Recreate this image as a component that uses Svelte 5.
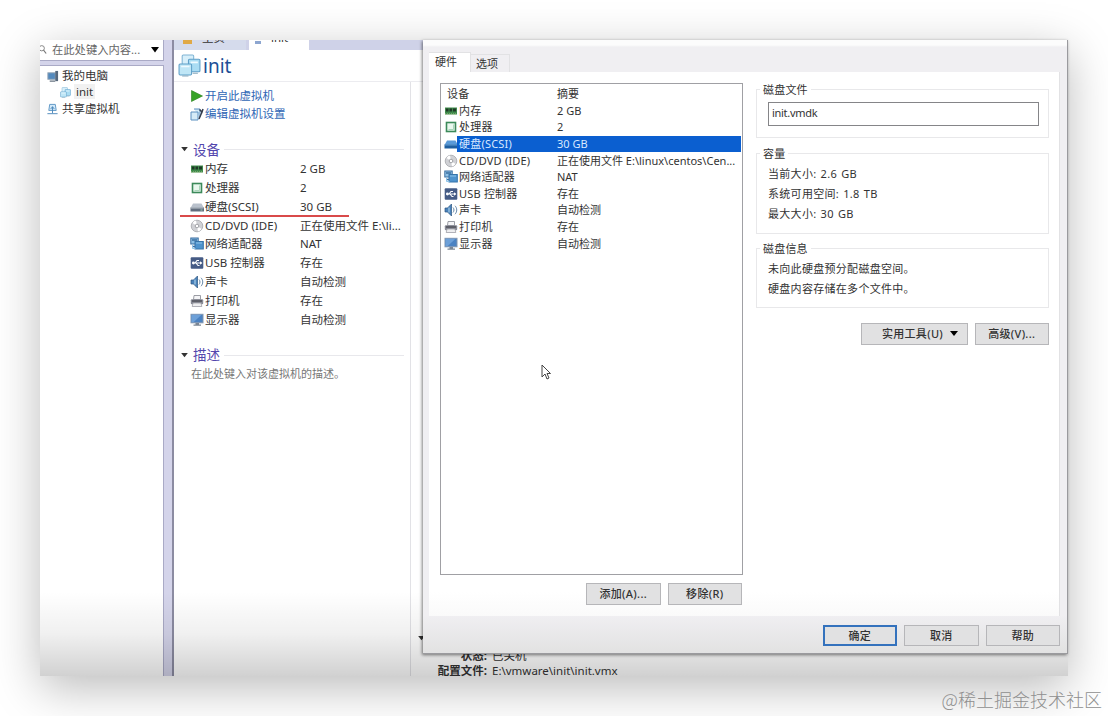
<script lang="ts">
	interface Device {
		icon: string;
		name: string;
		summary: string;
		path?: string;
	}

	const devices: Device[] = [
		{ icon: 'memory', name: '内存', summary: '2 GB' },
		{ icon: 'cpu', name: '处理器', summary: '2' },
		{ icon: 'disk', name: '硬盘(SCSI)', summary: '30 GB' },
		{ icon: 'cd', name: 'CD/DVD (IDE)', summary: '正在使用文件 E:\\li...', path: '正在使用文件 E:\\linux\\centos\\Cen...' },
		{ icon: 'network', name: '网络适配器', summary: 'NAT' },
		{ icon: 'usb', name: 'USB 控制器', summary: '存在' },
		{ icon: 'sound', name: '声卡', summary: '自动检测' },
		{ icon: 'printer', name: '打印机', summary: '存在' },
		{ icon: 'display', name: '显示器', summary: '自动检测' }
	];

	let selected = $state('disk');
</script>

{#snippet icon(name: string)}
	<svg class="icon" viewBox="0 0 14 14">
		{#if name === 'memory'}
			<path d="M1 3.5h12v7H1z" fill="#3f8a4b" />
			<path d="M2 4.5h2.5v3H2zM5.5 4.5H8v3H5.5zM9 4.5h3v3H9z" fill="#1f3826" />
			<path d="M1 10h12" stroke="#a9c58c" stroke-dasharray="1 1" />
		{:else if name === 'cpu'}
			<rect x="2.5" y="2.5" width="9" height="9" fill="#e9f8ee" stroke="#3c8a5a" stroke-width="1.6" />
			<path d="M4.5 9.5h5v-5" fill="none" stroke="#a9d5ba" />
		{:else if name === 'disk'}
			<path d="M3 3.5h8.5L14 8H.5z" fill="#b9c1cc" />
			<path d="M.5 7.5H14v4H.5z" fill="#616d7d" />
			<path d="M1 8h12.5" stroke="#e3e8ee" stroke-width=".7" />
			<path d="M10.5 10h2" stroke="#9fd0b5" />
		{:else if name === 'disk-selected'}
			<path d="M3 3.5h8.5L14 8H.5z" fill="#5a9ad8" />
			<path d="M.5 7.5H14v4H.5z" fill="#1f5f9f" />
			<path d="M1 8h12.5" stroke="#7fb7e6" stroke-width=".7" />
		{:else if name === 'cd'}
			<circle cx="7" cy="7" r="5.8" fill="#d0d1d5" stroke="#a4a6ab" stroke-width=".8" />
			<path d="M7 7 2.5 4A5.5 5.5 0 0 1 6 1.6zM7 7l4.6 3A5.5 5.5 0 0 1 8 12.4z" fill="#fff" />
			<circle cx="7" cy="7" r="1.8" fill="#fff" stroke="#8f9196" stroke-width=".8" />
		{:else if name === 'network'}
			<rect x=".8" y="1" width="7.4" height="6" fill="#8fc1e6" stroke="#3a6d9f" />
			<path d="M2 3h5M2 9.5h3" stroke="#3a6d9f" stroke-width="1.4" />
			<rect x="5" y="4.5" width="8.3" height="7.5" fill="#4e93cd" stroke="#3674aa" />
			<path d="M6 6h6M2.5 7.5v4h3" fill="none" stroke="#8fc4e9" />
		{:else if name === 'usb'}
			<rect x=".7" y="1.2" width="12.6" height="11.6" rx="1" fill="#455b85" />
			<path d="M2.5 7h9M5 7l2-2.5h2M6 7l2 2.5h1.5" fill="none" stroke="#fff" stroke-width="1.1" />
			<circle cx="3.4" cy="7" r="1.4" fill="#fff" />
			<path d="m10 5.2 2.4 1.8L10 8.8z" fill="#fff" />
		{:else if name === 'sound'}
			<path d="M1 5h2.5L7.5 1v12l-4-4H1z" fill="#4a82ba" stroke="#2b557f" stroke-width=".7" />
			<path d="M5 4.5v5" stroke="#b9dcf2" />
			<path d="M9 4.5c1.3 1.4 1.3 3.6 0 5M11 2.8c2.3 2.3 2.3 6 0 8.4" fill="none" stroke="#6688a8" />
		{:else if name === 'printer'}
			<path d="M4 1.5h6.5v4h-7z" fill="#f5f5f7" stroke="#84868f" stroke-width=".8" />
			<rect x=".8" y="5.2" width="12.4" height="5" rx="1" fill="#888a95" />
			<path d="M2 7h10" stroke="#34353d" />
			<path d="M3 9h8l.8 3.5H2.2z" fill="#eeeef0" stroke="#93949c" stroke-width=".7" />
		{:else}
			<rect x="1" y="1.3" width="12" height="8.5" fill="#4b82c2" stroke="#8296af" />
			<path d="M1.5 1.8h10l-8 7.5h-2z" fill="#6da0d8" />
			<path d="M5.5 10H9v1.5h2v1.3H3.5v-1.3h2z" fill="#7b8694" />
		{/if}
	</svg>
{/snippet}

{#snippet machine(cls: string)}
	<svg class={cls} viewBox="0 0 22 22">
		<rect x="4" y="1" width="11" height="11" rx="1" fill="#d7effa" stroke="#80b4d4" />
		<rect x="10" y="5" width="11" height="12" rx="1" fill="#a9dcf3" stroke="#5f9fc8" />
		<rect x="1" y="9.5" width="12" height="10.5" rx="1" fill="#bfe6f6" stroke="#5f9fc8" />
		<path d="M3 12h8M12 8h7" stroke="#effaff" stroke-width="1.5" />
		<path d="M4 21h6M14 18.5h5" stroke="#87a9bd" />
	</svg>
{/snippet}

<div class="page">
	<div class="screen">
		<aside class="library">
			<div class="search">
				<svg class="lens" viewBox="0 0 8 12"><circle cx="2" cy="4" r="3" fill="none" stroke="#777" /><path d="m4 6 3 4" stroke="#777" stroke-width="1.4" /></svg>
				<span>在此处键入内容...</span>
				<svg class="caret" viewBox="0 0 8 6"><path d="M0 0h8L4 5.5z" /></svg>
			</div>
			<div class="tree">
				<div class="node">
					<svg class="node-icon" viewBox="0 0 14 14"><rect x="2" y="3" width="8" height="7" fill="#5389bd" stroke="#96a6b5" /><path d="M10 1h3v11h-3z" fill="#55677c" /><path d="M4 12h6" stroke="#75818d" stroke-width="1.5" /></svg>
					我的电脑
				</div>
				<div class="node child">{@render machine('mini')}<span class="current">init</span></div>
				<div class="node">
					<svg class="node-icon" viewBox="0 0 14 14"><path d="M4 1.5h6l1 6.5H3z" fill="#d3eafa" stroke="#5a94c4" /><path d="M7 4v7M5 6.500 7 4l2 2.500M1.500 11.500h11" fill="none" stroke="#4b87ba" /></svg>
					共享虚拟机
				</div>
			</div>
		</aside>

		<main class="workspace">
			<div class="tabs">
				<div class="tab"><span class="house"></span><span>主页</span></div>
				<div class="tab open"><span class="dot"></span><span>init</span></div>
			</div>
			<header>{@render machine('logo')}<h1>init</h1></header>
			<div class="columns">
				<section class="overview">
					<div class="actions">
						<div class="action"><svg class="icon" viewBox="0 0 14 14"><path d="m1.5 1.5 11 5.5-11 5.5z" fill="#37a327" stroke="#27801b" stroke-width=".6" /></svg>开启此虚拟机</div>
						<div class="action"><svg class="icon" viewBox="0 0 14 14"><path d="M1 5h7v8H1zM4 2h6v8" fill="#d5ebf7" stroke="#5a8fc0" /><path d="M9 12 12 5M9.5 2.500 12 5l1-3" fill="none" stroke="#333b4c" stroke-width="1.5" /></svg>编辑虚拟机设置</div>
					</div>
					<h2><svg class="fold" viewBox="0 0 8 6"><path d="M0 0h8L4 5z" /></svg>设备<i></i></h2>
					<div class="devices">
						{#each devices as device}
							<div class="device">{@render icon(device.icon)}<span class="name">{device.name}</span><span>{device.summary}</span></div>
						{/each}
						<div class="marker"></div>
					</div>
					<h2 class="second"><svg class="fold" viewBox="0 0 8 6"><path d="M0 0h8L4 5z" /></svg>描述<i></i></h2>
					<p class="hint">在此处键入对该虚拟机的描述。</p>
				</section>
				<section class="details">
					<svg class="fold" viewBox="0 0 8 6"><path d="M0 0h8L4 5z" /></svg>
					<dl>
						<dt>状态:</dt><dd>已关机</dd>
						<dt>配置文件:</dt><dd>E:\vmware\init\init.vmx</dd>
					</dl>
				</section>
			</div>
		</main>
		<div class="shade"></div>

		<div class="dialog">
			<div class="dialog-tabs">
				<div class="dialog-tab front">硬件</div>
				<div class="dialog-tab">选项</div>
			</div>
			<div class="sheet">
				<div class="hardware">
					<div class="listbox">
						<div class="row head"><span class="cell">设备</span><span>摘要</span></div>
						{#each devices as device}
							<div class="row" class:selected={selected === device.icon}>
								{@render icon(selected === device.icon ? device.icon + '-selected' : device.icon)}
								<div class="row-text"><span class="cell">{device.name}</span><span>{device.path ?? device.summary}</span></div>
							</div>
						{/each}
					</div>
					<div class="buttons">
						<button onclick={() => (selected = 'disk')}>添加(A)...</button>
						<button>移除(R)</button>
					</div>
				</div>
				<div class="settings">
					<div class="group file"><span class="legend">磁盘文件</span><div class="field">init.vmdk</div></div>
					<div class="group capacity">
						<span class="legend">容量</span>
						<p>当前大小: 2.6 GB</p>
						<p>系统可用空间: 1.8 TB</p>
						<p>最大大小: 30 GB</p>
					</div>
					<div class="group info">
						<span class="legend">磁盘信息</span>
						<p>未向此硬盘预分配磁盘空间。</p>
						<p>硬盘内容存储在多个文件中。</p>
					</div>
					<div class="buttons tools">
						<button class="wide">实用工具(U)<svg class="caret" viewBox="0 0 8 6"><path d="M0 0h8L4 5z" /></svg></button>
						<button>高级(V)...</button>
					</div>
				</div>
			</div>
			<footer>
				<button class="primary">确定</button>
				<button>取消</button>
				<button>帮助</button>
			</footer>
		</div>

		<svg class="pointer" viewBox="0 0 10 16"><path d="M1 1v12l3-3 2 5 2-1-2-4.5h3.5z" fill="#fff" stroke="#444" /></svg>
	</div>
	<div class="credit">@稀土掘金技术社区</div>
</div>

<style>
	:global(body) {
		background: #fff;
	}

	.page {
		box-sizing: border-box;
		position: relative;
		width: 1108px;
		height: 716px;
		padding: 40px;
		overflow: hidden;
		font: 11.5px/18px "Noto Sans", "Noto Sans CJK SC", sans-serif;
		color: #333;
		white-space: nowrap;
	}

	.page * {
		box-sizing: border-box;
	}

	svg {
		flex: none;
		display: block;
	}

	.screen {
		position: relative;
		display: flex;
		width: 1028px;
		height: 636px;
		background: #fff;
		box-shadow: 0 12px 44px rgba(0, 0, 0, 0.27);
	}

	/* library */
	.library {
		display: flex;
		flex-direction: column;
		gap: 4px;
		width: 134px;
		padding-right: 8px;
		background: #d4d4ea;
		border-right: 2px solid #8c8ca2;
	}

	.search {
		display: flex;
		align-items: center;
		height: 21px;
		background: #fff;
		border: solid #aaaac6;
		border-width: 0 1px 1px 0;
		font-size: 11.3px;
		color: #666;
	}

	.search span {
		width: 99px;
		padding-left: 5px;
	}

	.lens {
		width: 7px;
		height: 12px;
	}

	.caret {
		width: 8px;
		height: 6px;
		margin-left: 5px;
	}

	.tree {
		flex: 1;
		padding-top: 2px;
		background: #fff;
		border: solid #aaaac6;
		border-width: 1px 1px 0 0;
	}

	.node {
		display: flex;
		align-items: center;
		gap: 3px;
		height: 16.6px;
		padding-left: 6px;
	}

	.node.child {
		padding-left: 20px;
	}

	.node-icon {
		width: 13px;
		height: 13px;
	}

	.mini {
		width: 11px;
		height: 11px;
	}

	.current {
		margin-bottom: 2px;
		padding: 0 2px;
		background: #f1f1f1;
		line-height: 15px;
	}

	/* workspace */
	.workspace {
		display: flex;
		flex: 1;
		flex-direction: column;
		min-width: 0;
	}

	.tabs {
		display: flex;
		gap: 3px;
		height: 10px;
		background: #cfd2e8;
	}

	.tab {
		display: flex;
		align-items: flex-end;
		gap: 10px;
		width: 72px;
		height: 10px;
		padding-left: 9px;
		overflow: hidden;
		background: #d5dbec;
		line-height: 14px;
	}

	.tab span {
		margin-bottom: 5px;
	}

	.tab.open {
		width: 60px;
		padding-left: 6px;
		background: #fff;
	}

	.tab .house {
		width: 9px;
		height: 4px;
		margin-bottom: 6px;
		background: #e0a947;
	}

	.tab .dot {
		width: 6px;
		height: 3px;
		margin-bottom: 6px;
		background: #8da6d0;
	}

	header {
		display: flex;
		align-items: center;
		gap: 2px;
		height: 32px;
		padding-left: 4px;
		border-bottom: 1px solid #ececf0;
	}

	.logo {
		width: 23px;
		height: 23px;
	}

	h1 {
		margin: 0;
		font-size: 19px;
		font-weight: 400;
		line-height: 32px;
		color: #204f96;
	}

	.columns {
		display: flex;
		flex: 1;
		min-height: 0;
	}

	.overview {
		width: 237px;
		padding: 5px 6px 0 7px;
		border-right: 1px solid #e2e2e6;
	}

	.action {
		display: flex;
		align-items: center;
		height: 17.8px;
		padding-left: 9px;
		color: #2f66b5;
	}

	.icon {
		width: 14px;
		height: 14px;
	}

	.overview .icon {
		margin-right: 1px;
	}

	h2 {
		display: flex;
		align-items: center;
		height: 20px;
		margin: 17px 0 0;
		font-size: 13.5px;
		font-weight: 400;
		color: #5346ad;
	}

	h2.second {
		margin-top: 16px;
	}

	h2 i {
		flex: 1;
		height: 1px;
		margin-left: 4px;
		background: #e8e8ec;
	}

	.fold {
		width: 7px;
		height: 5px;
		margin-right: 5px;
		fill: #333;
	}

	.devices {
		position: relative;
	}

	.device {
		display: flex;
		align-items: center;
		height: 18.85px;
		padding-left: 9px;
	}

	.name {
		width: 95px;
	}

	/* red stroke under the disk row */
	.marker {
		position: absolute;
		top: 55.5px;
		left: -1px;
		width: 169px;
		height: 2px;
		background: #d94a4a;
	}

	.hint {
		margin: 0;
		padding-left: 10px;
		font-size: 11px;
		color: #777;
	}

	.details {
		flex: 1;
		display: flex;
		flex-direction: column;
		justify-content: flex-end;
		padding-left: 7px;
	}

	dl {
		display: grid;
		grid-template-columns: 69px 1fr;
		column-gap: 5px;
		margin: 7px 0 -2px;
		line-height: 15px;
	}

	dt {
		font-weight: 700;
		text-align: right;
	}

	dd {
		margin: 0;
	}

	.shade {
		position: absolute;
		right: 0;
		bottom: 0;
		left: 0;
		height: 84px;
		background: linear-gradient(transparent, rgba(0, 0, 0, 0.06) 50%, rgba(0, 0, 0, 0.18));
	}

	/* settings dialog */
	.dialog {
		position: absolute;
		top: 0;
		right: 0;
		display: flex;
		flex-direction: column;
		width: 645px;
		height: 614px;
		padding: 12px 7px 0 6px;
		background: linear-gradient(#fcfcfc 5px, #f0eff2 7px, #f0eff2 575px, #e2e2e2);
		border: solid #9a9a9e;
		border-width: 0 1px 1px 0;
		box-shadow: -1px 1px 3px rgba(0, 0, 0, 0.5);
		font-size: 11px;
	}

	.dialog-tabs {
		display: flex;
		align-items: flex-end;
		height: 20px;
	}

	.dialog-tab {
		width: 39px;
		height: 18px;
		padding-left: 5px;
		border: solid #e2e2e4;
		border-width: 1px 1px 0 0;
		line-height: 17px;
	}

	.dialog-tab.front {
		width: 42px;
		height: 20px;
		padding-left: 6px;
		background: #fff;
	}

	.sheet {
		display: flex;
		gap: 13px;
		height: 544px;
		padding: 11px 10px 0 11px;
		background: linear-gradient(#fff 520px, #fafafa);
		border-right: 1px solid #e2e2e4;
	}

	.hardware {
		width: 303px;
	}

	.listbox {
		height: 492px;
		padding: 2px 1px;
		border: 1px solid #a0a0a4;
	}

	.row {
		display: flex;
		align-items: center;
		height: 16.6px;
		padding-left: 2px;
		line-height: 16px;
	}

	.row.head {
		padding-left: 5px;
	}

	.row-text {
		display: flex;
		flex: 1;
		padding-left: 1px;
	}

	.cell {
		width: 98px;
		letter-spacing: 0.2px;
	}

	.head .cell {
		width: 110px;
	}

	.selected .row-text {
		margin-left: -1px;
		padding-left: 2px;
		background: #0b5fd0;
		color: #d8e9ff;
	}

	.buttons {
		display: flex;
		justify-content: flex-end;
		gap: 7px;
		padding: 8px 1px 0 0;
	}

	button {
		display: flex;
		align-items: center;
		justify-content: center;
		width: 74.5px;
		height: 22px;
		padding: 0;
		background: #e1e1e2;
		border: 1px solid #b6b6b9;
		font: inherit;
		font-weight: 500;
		letter-spacing: 0.3px;
		color: #333;
	}

	.settings {
		width: 293px;
		padding-top: 6px;
	}

	.group {
		height: 49px;
		padding: 0 11px;
		border: 1px solid #e8e8ea;
	}

	.legend {
		display: block;
		width: fit-content;
		height: 14px;
		margin: -8px 0 0 -8px;
		padding: 0 3px;
		background: #fff;
		letter-spacing: 0.2px;
		line-height: 16px;
	}

	.field {
		width: 271px;
		height: 24px;
		margin-top: 6px;
		padding-left: 3px;
		border: 1px solid #858588;
		letter-spacing: -0.3px;
		line-height: 19px;
	}

	.capacity {
		height: 81px;
		margin-top: 15px;
	}

	.info {
		height: 60px;
		margin-top: 14px;
	}

	.group p {
		height: 20.2px;
		margin: 0;
		letter-spacing: 0.3px;
		word-spacing: 1px;
		line-height: 20px;
	}

	.legend + p {
		margin-top: 4px;
	}

	.tools {
		padding: 15px 0 0;
	}

	.wide {
		width: 107px;
		padding-left: 12px;
	}

	.tools .caret {
		margin-left: 7px;
	}

	footer {
		display: flex;
		justify-content: flex-end;
		gap: 7px;
		padding-top: 9px;
	}

	footer button {
		height: 21px;
	}

	.primary {
		border: 2px solid #3472bd;
	}

	.pointer {
		position: absolute;
		top: 324px;
		left: 501px;
		width: 10px;
		height: 16px;
	}

	.credit {
		position: absolute;
		right: 6px;
		bottom: 5px;
		font: 300 18px/24px "Noto Sans CJK SC", sans-serif;
		color: #8f8f8f;
	}
</style>
